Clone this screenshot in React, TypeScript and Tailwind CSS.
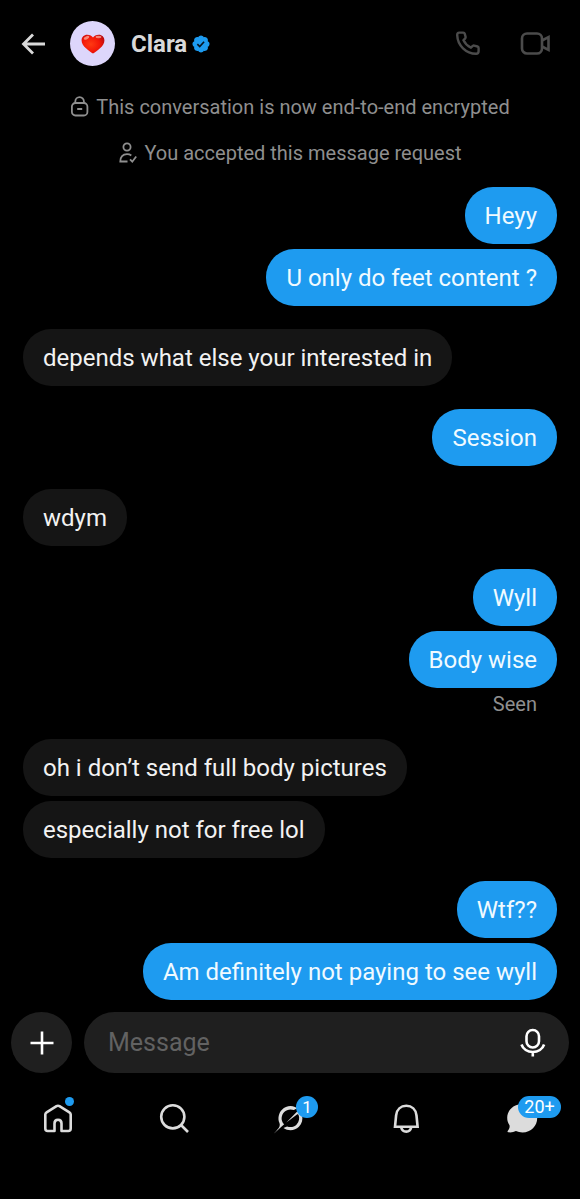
import React from "react";
import clsx from "clsx";

type Message = { text: string; mine?: boolean };
type Group = { messages: Message[]; status?: string };

const groups: Group[] = [
  { messages: [{ text: "Heyy", mine: true }, { text: "U only do feet content ?", mine: true }] },
  { messages: [{ text: "depends what else your interested in" }] },
  { messages: [{ text: "Session", mine: true }] },
  { messages: [{ text: "wdym" }] },
  { messages: [{ text: "Wyll", mine: true }, { text: "Body wise", mine: true }], status: "Seen" },
  { messages: [{ text: "oh i don’t send full body pictures" }, { text: "especially not for free lol" }] },
  { messages: [{ text: "Wtf??", mine: true }, { text: "Am definitely not paying to see wyll", mine: true }] },
];

const VerifiedIcon = () => (
  <svg viewBox="0 0 22 22" className="size-5" aria-label="Verified account">
    <path
      fill="#1d9bf0"
      d="M20.396 11c-.018-.646-.215-1.275-.57-1.816-.354-.54-.852-.972-1.438-1.246.223-.607.27-1.264.14-1.897-.131-.634-.437-1.218-.882-1.687-.47-.445-1.053-.75-1.687-.882-.633-.13-1.29-.083-1.897.14-.273-.587-.704-1.086-1.245-1.44S11.647 1.62 11 1.604c-.646.017-1.273.213-1.813.568s-.969.854-1.24 1.44c-.608-.223-1.267-.272-1.902-.14-.635.13-1.22.436-1.69.882-.445.47-.749 1.055-.878 1.688-.13.633-.08 1.29.144 1.896-.587.274-1.087.705-1.443 1.245-.356.54-.555 1.17-.574 1.817.02.647.218 1.276.574 1.817.356.54.856.972 1.443 1.245-.224.606-.274 1.263-.144 1.896.13.634.433 1.218.877 1.688.47.443 1.054.747 1.687.878.633.132 1.29.084 1.897-.136.274.586.705 1.084 1.246 1.439.54.354 1.17.551 1.816.569.647-.016 1.276-.213 1.817-.567s.972-.854 1.245-1.44c.604.239 1.266.296 1.903.164.636-.132 1.22-.447 1.68-.907.46-.46.776-1.044.908-1.681s.075-1.299-.165-1.903c.586-.274 1.084-.705 1.439-1.246.354-.54.551-1.17.569-1.816z"
    />
    <path fill="none" stroke="#06131f" strokeWidth="1.8" d="M7 11.2l2.6 2.6 4.8-5.3" />
  </svg>
);

const HeartIcon = () => (
  <svg viewBox="0 0 24 20" className="w-6 h-5" aria-hidden="true">
    <defs>
      <radialGradient id="heart" cx="0.4" cy="0.5" r="0.65">
        <stop offset="0" stopColor="#ff3a12" />
        <stop offset="0.6" stopColor="#f31708" />
        <stop offset="1" stopColor="#b80a10" />
      </radialGradient>
    </defs>
    <path
      fill="url(#heart)"
      d="M12 19.6C10.6 18.4 7.6 16.6 5 14.2 2.2 11.6.6 9.3.6 6.4.6 3.1 3 .8 6.2.8 8.800.8 11 2 12 3.600 13 2 15.200.8 17.800.8 21 .8 23.400 3.100 23.400 6.400 23.400 9.300 21.800 11.600 19 14.200 16.400 16.600 13.400 18.400 12 19.600z"
    />
    <ellipse cx="5.5" cy="3.800" rx="3" ry="1.5" fill="#ffc0ae" opacity="0.65" transform="rotate(-25 5.5 3.8)" />
    <ellipse cx="17.5" cy="3" rx="3" ry="1.200" fill="#ffc0ae" opacity="0.65" />
  </svg>
);

function Bubble({ text, mine }: Message) {
  return (
    <p
      className={clsx(
        "rounded-[28px] px-5 pt-[13px] pb-[11px] text-2xl leading-[33px]",
        mine ? "self-end bg-[#1e9bf0] text-[#f0faff]" : "self-start bg-[#151515] text-[#f2f2f2]"
      )}
    >
      {text}
    </p>
  );
}

function Header() {
  return (
    <header className="flex items-center h-[87px] pl-5 pr-7 text-[#d9d9d9]">
      <button aria-label="Back">
        <svg viewBox="0 0 28 28" className="size-7" fill="none" stroke="currentColor" strokeWidth="2.8">
          <path d="M13 4.5L3.5 14l9.5 9.5M3.5 14H25" />
        </svg>
      </button>
      <div className="flex items-center justify-center ml-[22px] size-[45px] rounded-full bg-[#ddd6fb]">
        <HeartIcon />
      </div>
      <h1 className="ml-4 mr-1 text-2xl leading-7 font-bold">Clara</h1>
      <VerifiedIcon />
      <div className="flex items-center gap-9 ml-auto text-[#4b4b4b]">
        <button aria-label="Audio call">
          <svg viewBox="0 0 30 30" className="size-[30px]" fill="none" stroke="currentColor" strokeWidth="2.4">
            <path d="M5.2 3.600h4c.8 0 1.300.4 1.500 1.100l.9 3.300c.1.600 0 1-.4 1.400l-1.700 1.900c1.500 3.200 4.200 5.900 7.400 7.400l1.900-1.700c.4-.4.900-.5 1.400-.4l3.300.9c.7.2 1.100.7 1.100 1.500v3.200c0 1.500-1 2.500-2.500 2.500C12 24.700 3.600 16.500 3.200 6.100c0-1.500.7-2.500 2-2.500z" />
          </svg>
        </button>
        <button aria-label="Video call">
          <svg viewBox="0 0 32 30" className="w-8 h-[30px]" fill="none" stroke="currentColor" strokeWidth="2.6">
            <rect x="2" y="4.500" width="20" height="20" rx="5" />
            <path d="M22 11.500l6.500-3.300v12.600L22 17.500" />
          </svg>
        </button>
      </div>
    </header>
  );
}

function Notices() {
  return (
    <div className="flex flex-col items-center gap-[18px] pt-1.5 text-xl leading-7 text-[#8f8f8f]">
      <p className="flex items-center gap-1.5">
        <svg viewBox="0 0 20 22" className="w-5 h-[22px]" fill="none" stroke="currentColor" strokeWidth="1.8">
          <rect x="1.900" y="7" width="15.5" height="12.5" rx="3.5" />
          <path d="M5.300 7V5.500a4.300 4.300 0 018.600 0V7M7.200 13h5" />
        </svg>
        This conversation is now end-to-end encrypted
      </p>
      <p className="flex items-center gap-1.5">
        <svg viewBox="0 0 20 22" className="w-5 h-[22px]" fill="none" stroke="currentColor" strokeWidth="1.8">
          <circle cx="9" cy="5" r="3.600" />
          <path d="M9.500 19.500H2.300c0-4.500 2.400-7.300 6.700-7.300 1.800 0 3.200.5 4.300 1.300M12 17.400l2.300 2.300 3.900-5.200" />
        </svg>
        You accepted this message request
      </p>
    </div>
  );
}

function Composer() {
  return (
    <form className="flex gap-3 px-[11px] mt-3">
      <button
        type="button"
        aria-label="Add attachment"
        className="flex items-center justify-center shrink-0 size-[61px] rounded-full bg-[#1f1f1f] text-white"
      >
        <svg viewBox="0 0 24 24" className="size-6" stroke="currentColor" strokeWidth="2.6">
          <path d="M12 .5v23M.5 12h23" />
        </svg>
      </button>
      <div className="flex flex-1 items-center h-[61px] pl-6 pr-[22px] rounded-full bg-[#1f1f1f]">
        <input
          type="text"
          aria-label="Message"
          placeholder="Message"
          className="flex-1 min-w-0 text-[25px] leading-8 text-white outline-none placeholder:text-[#626262]"
        />
        <button type="button" aria-label="Record voice message" className="text-white">
          <svg viewBox="0 0 28 30" className="w-7 h-[30px]" fill="none" stroke="currentColor" strokeWidth="2.6">
            <rect x="7.500" y="2" width="12.500" height="17.500" rx="6.200" />
            <path d="M2.500 16.500c1.500 4.500 6 7.500 11.300 7.500s9.800-3 11.300-7.500M13.800 24v4.500" />
          </svg>
        </button>
      </div>
    </form>
  );
}

function NavBar() {
  return (
    <nav className="grid grid-cols-5 h-[126px] pt-[29px] text-[#dcdcdc]">
      <a href="#home" aria-label="Home" className="relative justify-self-center size-8 self-start">
        <svg viewBox="0 0 32 32" className="size-8" fill="none" stroke="currentColor" strokeWidth="2.6">
          <path
            strokeLinejoin="round"
            d="M14.500 4.200L4.600 10.300c-.8.500-1.300 1.300-1.300 2.200v14c0 1.500 1 2.500 2.500 2.500h6.700v-7.400c0-2.200 1.300-3.800 3.500-3.800s3.500 1.600 3.500 3.800V29h6.700c1.500 0 2.500-1 2.500-2.500v-14c0-.9-.5-1.700-1.300-2.200l-9.900-6.100c-1-.6-2-.6-3 0z"
          />
        </svg>
        <span className="absolute -top-[5px] left-[23px] size-[9px] rounded-full bg-[#1e9bf0]" />
      </a>
      <a href="#search" aria-label="Search" className="justify-self-center size-8 self-start">
        <svg viewBox="0 0 32 32" className="size-8" fill="none" stroke="currentColor" strokeWidth="2.6">
          <circle cx="14.800" cy="14.800" r="11.600" />
          <path d="M23 23l7 7" />
        </svg>
      </a>
      <a href="#grok" aria-label="Grok" className="relative justify-self-center size-8 self-start">
        <svg viewBox="0 0 33 32" className="size-8" fill="currentColor">
          <path d="M12.745 20.54l10.97-8.19c.539-.4 1.307-.244 1.564.38 1.349 3.288.746 7.241-1.938 9.955-2.683 2.714-6.417 3.31-9.83 1.954l-3.728 1.745c5.347 3.697 11.84 2.782 15.898-1.324 3.219-3.255 4.216-7.692 3.284-11.693l.008.009c-1.351-5.878.332-8.227 3.782-13.031L33 0l-4.54 4.59v-.014L12.743 20.544m-2.263 1.987c-3.837-3.707-3.175-9.446.1-12.755 2.42-2.449 6.388-3.448 9.852-1.979l3.72-1.737c-.67-.49-1.53-1.017-2.515-1.387-4.455-1.854-9.789-.931-13.41 2.728-3.483 3.523-4.579 8.94-2.697 13.561 1.405 3.454-.899 5.898-3.22 8.364C1.49 30.2.666 31.074 0 32l10.478-9.466" />
        </svg>
        <span className="absolute -top-[6px] left-[22px] flex items-center justify-center size-[22px] rounded-full bg-[#1e9bf0] text-[17px] leading-5 text-white">
          1
        </span>
      </a>
      <a href="#notifications" aria-label="Notifications" className="justify-self-center size-8 self-start">
        <svg viewBox="0 0 32 32" className="size-8" fill="none" stroke="currentColor" strokeWidth="2.6">
          <path d="M5 24.800L6.100 13.500C6.700 7.500 10.800 3.800 16.300 3.800s9.600 3.700 10.200 9.700l1.100 11.300zM11 25c.7 2.800 2.500 4.600 5.200 4.600s4.500-1.800 5.200-4.600" />
        </svg>
      </a>
      <a href="#messages" aria-label="Messages" className="relative justify-self-center size-8 self-start">
        <svg viewBox="0 0 32 32" className="size-8" fill="currentColor">
          <path d="M16.500 2C8 2 1.200 8 1.200 15.700c0 3 .8 5.300 2.300 7.500.4 2.200-.1 4-1.800 5.800-.4.500-.2 1.100.5 1.300 2.900.3 5.500-.1 7.700-1.200 2 .9 4.200 1.400 6.600 1.400 8.500 0 14.700-6.500 14.700-14.500S25 2 16.500 2z" />
        </svg>
        <span className="absolute -top-[6px] left-3 flex items-center justify-center w-[43px] h-[22px] rounded-full bg-[#1e9bf0] text-lg leading-5 text-white">
          20+
        </span>
      </a>
    </nav>
  );
}

export default function App() {
  return (
    <div className="flex flex-col min-h-screen bg-black font-['Roboto','Liberation_Sans',sans-serif]">
      <Header />
      <main className="flex flex-1 flex-col">
        <Notices />
        {/* Conversation */}
        <div className="flex flex-col gap-[23px] px-[23px] pt-5">
          {groups.map((group, i) => (
            <section key={i} className="flex flex-col gap-[5px]">
              {group.messages.map((message) => (
                <Bubble key={message.text} {...message} />
              ))}
              {group.status && (
                <p className="self-end pr-5 text-xl leading-[23px] text-[#8f8f8f]">{group.status}</p>
              )}
            </section>
          ))}
        </div>
      </main>
      <Composer />
      <NavBar />
    </div>
  );
}
